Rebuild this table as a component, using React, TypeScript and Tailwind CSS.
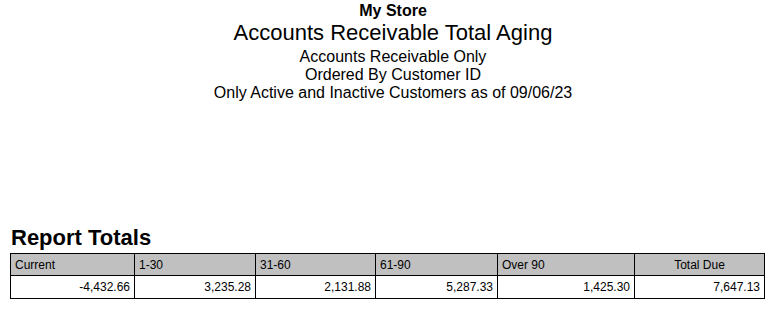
import React from "react";

const cols = [
  { label: "Current", value: "-4,432.66", w: "w-[124px]", center: false },
  { label: "1-30", value: "3,235.28", w: "w-[121px]", center: false },
  { label: "31-60", value: "2,131.88", w: "w-[120px]", center: false },
  { label: "61-90", value: "5,287.33", w: "w-[122px]", center: false },
  { label: "Over 90", value: "1,425.30", w: "w-[137px]", center: false },
  { label: "Total Due", value: "7,647.13", w: "w-[130px]", center: true },
];

export default function App() {
  return (
    <div className="w-[768px] h-[309px] bg-white text-black overflow-hidden font-['Liberation_Sans',Arial,sans-serif]">
      {/* Report header */}
      <div className="pl-[18px] text-center">
        <div className="pt-[2px] text-[16px] leading-[18px] font-bold">My Store</div>
        <div className="text-[22px] leading-[25px]">Accounts Receivable Total Aging</div>
        <div className="mt-[3px] text-[16px] leading-[18px]">
          <div>Accounts Receivable Only</div>
          <div>Ordered By Customer ID</div>
          <div>Only Active and Inactive Customers as of 09/06/23</div>
        </div>
      </div>

      {/* Totals */}
      <div className="px-[10px] mt-[124px]">
        <div className="pl-[1px] text-[22px] leading-[24px] font-bold">Report Totals</div>
        <div className="mt-[3px] flex flex-col w-max border-l border-t border-black text-[12px]">
          <div className="flex bg-[#c0c0c0]">
            {cols.map((c) => (
              <div
                key={c.label}
                className={`${c.w} h-[22px] flex items-center border-r border-b border-black px-[4px] ${
                  c.center ? "justify-center" : "justify-start"
                }`}
              >
                {c.label}
              </div>
            ))}
          </div>
          <div className="flex">
            {cols.map((c) => (
              <div
                key={c.label}
                className={`${c.w} h-[23px] flex items-center justify-end border-r border-b border-black pr-[4px]`}
              >
                {c.value}
              </div>
            ))}
          </div>
        </div>
      </div>
    </div>
  );
}
